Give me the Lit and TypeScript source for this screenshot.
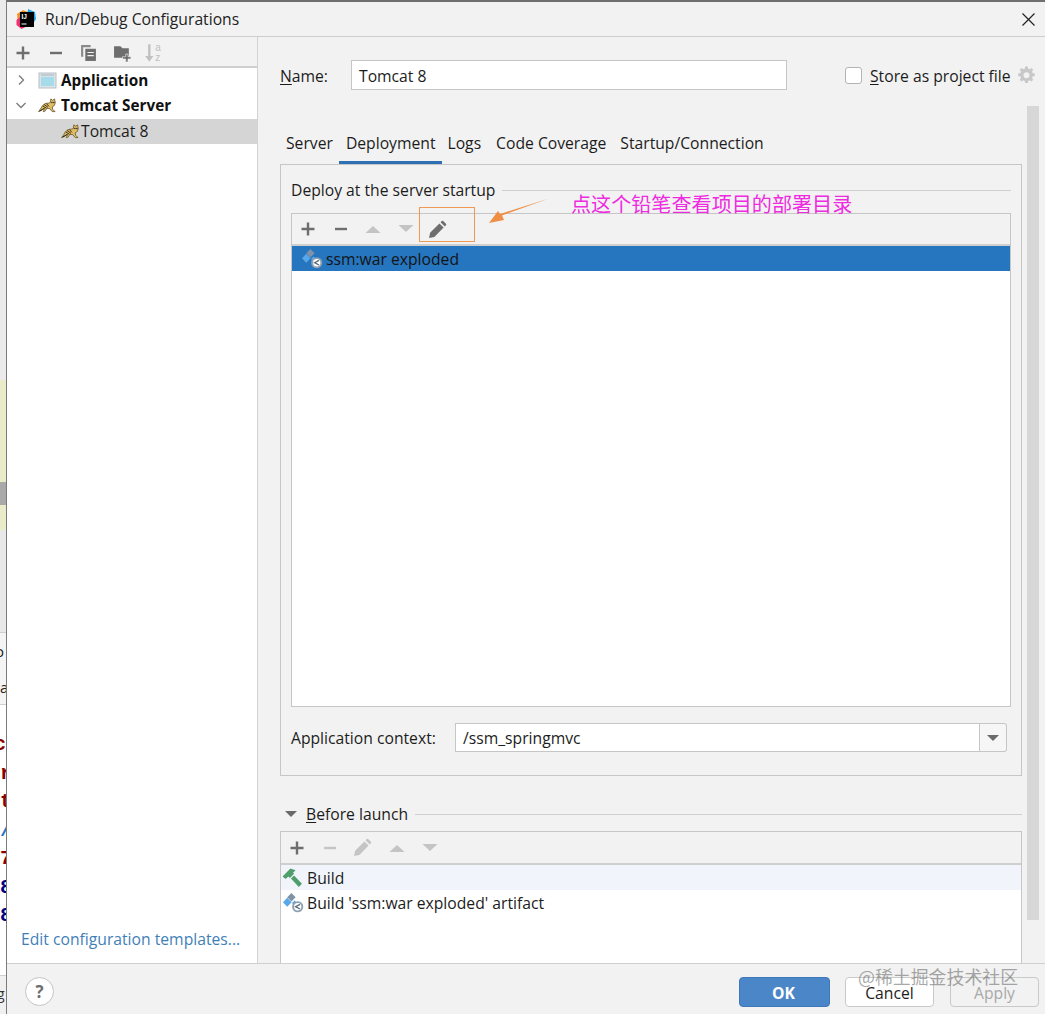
import { LitElement, html, css } from "lit";
import { customElement } from "lit/decorators.js";

const plus = (c = "#6e6e6e") => html`<svg width="16" height="16" viewBox="0 0 16 16"><path d="M1.500 6.800h5.300V1.500h2.400v5.300h5.300v2.400H9.200v5.300H6.800V9.200H1.500z" fill=${c}/></svg>`;
const minus = (c = "#6e6e6e") => html`<svg width="16" height="16" viewBox="0 0 16 16"><path d="M2 6.800h12v2.400H2z" fill=${c}/></svg>`;
const up = (c = "#c4c4c4") => html`<svg width="16" height="16" viewBox="0 0 16 16"><path d="M0.500 12L8 5l7.500 7z" fill=${c}/></svg>`;
const down = (c = "#c4c4c4") => html`<svg width="16" height="16" viewBox="0 0 16 16"><path d="M0.500 4L8 11l7.500-7z" fill=${c}/></svg>`;
const pencil = (c = "#6e6e6e") => html`<svg width="19" height="19" viewBox="0 0 18 18"><path d="M1 17l1-5L10.800 3.200l4 4L6 16zM11.900 2.100l1.100-1.100a1 1 0 0 1 1.400 0l2.600 2.600a1 1 0 0 1 0 1.400l-1.100 1.100z" fill=${c}/></svg>`;
const tomcat = html`<svg width="19" height="16" viewBox="0 0 20 17"><path d="M0.500 15.500C2 14 3 12 4.500 9.500 6 7.500 8 6.500 11 6.500l2-.500.500-4 2 1.500 2-1.500.800 4-1 3-2.300 1.500.500 2.500 2.500 2.500h-3l-2.500-3-3-.500-2.500 3.500H5.500l1.500-3.500-2.500 1.500-1.500 1z" fill="#e3bd62" stroke="#5d4e26" stroke-width=".8"/><path d="M5 9.500l4 2.500M6.500 8l4 3M9 7l2.500 3M1.500 15l5-3" stroke="#2e2a1c" stroke-width="1" fill="none"/><circle cx="14.700" cy="5.800" r=".8" fill="#222"/><circle cx="16.800" cy="5.800" r=".8" fill="#222"/></svg>`;
const artifact = html`<svg width="21" height="21" viewBox="0 0 20 20"><path d="M8 1l4 4-4 4-4-4z" fill="#7f93a8"/><path d="M4 5.500l4.200 4.200L4 14 0 9.700z" fill="#58a7e8"/><path d="M8.500 10.500l2.500-2.500 2 2-2.500 2.500z" fill="#58a7e8"/><circle cx="14" cy="14" r="5.300" fill="#8fa0b0"/><circle cx="14" cy="14" r="3.500" fill="#fff"/><path d="M16.200 11.800l-4.200 2.200 4.200 2.200" fill="none" stroke="#5a6e80" stroke-width="1.300"/></svg>`;

@customElement("app-root")
export class AppRoot extends LitElement {
  static styles = css`
    :host { display: block; width: 1045px; height: 1014px; overflow: hidden; position: relative; background: #f2f2f2;
      font: 15.700px "Open Sans", "Noto Sans", sans-serif; color: #1c1c1c; }
    * { box-sizing: border-box; }
    u { text-underline-offset: 2px; }
    .screen { display: flex; height: 1014px; }
    .strip { width: 7px; flex: none; display: flex; flex-direction: column; overflow: hidden; border-right: 1px solid #7b7b7b; font: 700 20px "Liberation Mono", monospace; }
    .seg { flex: none; white-space: nowrap; overflow: hidden; text-indent: -6px; }
    .s-light { background: #ebebeb; height: 380px; }
    .s-yel { background: #eaecc9; height: 102px; }
    .s-gray { background: #a9a9a9; height: 23px; }
    .s-yel2 { background: #eaecc9; height: 25px; }
    .s-light2 { background: #e8e8e8; height: 102px; }
    .s-words { height: 73px; background: #f4f4f4; border-top: 1px solid #cfcfcf; border-bottom: 1px solid #cfcfcf; color: #222; font: 400 15px/36px "Open Sans", sans-serif; text-indent: -5px; }
    .s-code { height: 270px; background: #fff; padding-top: 26px; line-height: 28.500px; }
    .s-end { flex: 1; background: #f0f0f0; border-top: 1px solid #cfcfcf; font: 400 14px/36px "Open Sans", sans-serif; color: #333; text-indent: -3px; }
    .red { color: #8a0000; } .blue { color: #2675bf; } .navy { color: #000080; }
    .dialog { flex: 1; min-width: 0; display: flex; flex-direction: column; border-top: 2px solid #6f6f6f; background: #f2f2f2; }
    .title { height: 35px; flex: none; border-bottom: 1px solid #cdcdcd; display: flex; align-items: center; padding: 0 9px 0 8px; gap: 8px; }
    .title .t { flex: 1; color: #222; }
    .body { flex: 1; min-height: 0; display: flex; }
    .side { width: 251px; flex: none; border-right: 1px solid #d2d2d2; display: flex; flex-direction: column; }
    .side-bar { height: 31px; flex: none; border-bottom: 2px solid #d0d0d0; display: flex; align-items: center; padding: 2px 0 0 8px; gap: 17px; }
    .side-bar .copy { margin-left: -1px; }
    .side-bar .folder { margin-left: -1px; }
    .side-bar .sort { margin-left: -5px; }
    .tree { flex: 1; background: #fff; display: flex; flex-direction: column; padding-bottom: 13px; }
    .row { height: 25px; display: flex; align-items: center; flex: none; line-height: 23px; padding-bottom: 1px; }
    .tw { width: 31px; padding-left: 8px; flex: none; display: flex; }
    .ico { width: 22px; flex: none; display: flex; margin-right: 1px; }
    .b { font-weight: 700; font-size: 15.300px; color: #111; }
    .sel { background: #d5d5d5; padding-left: 54px; margin-top: 1px; }
    .sel .cat { display: flex; width: 20px; flex: none; }
    .link { margin-top: auto; padding-left: 14px; color: #3f7fb8; }
    .main { flex: 1; min-width: 0; display: flex; padding: 23px 6px 0 22px; }
    .col { flex: 1; min-width: 0; display: flex; flex-direction: column; }
    .top { display: flex; align-items: center; height: 30px; flex: none; margin-right: -18px; }
    .top label { width: 71px; padding-top: 1px; }
    .top .store { padding-top: 2px; margin-right: 1px; }
    .input { background: #fff; border: 1px solid #c6c6c6; height: 30px; display: flex; align-items: center; padding-left: 7px; }
    .name { width: 436px; padding-top: 1px; }
    .check { width: 17px; height: 17px; background: #fff; border: 1px solid #b4b4b4; border-radius: 3px; margin: 0 8px 0 58px; flex: none; }
    .gear { margin-left: 6px; display: flex; }
    .tabs { display: flex; height: 43px; margin-top: 31px; flex: none; }
    .tab { padding: 11px 6px 0; white-space: nowrap; }
    .tab.active { box-shadow: inset 0 -3px #2f6fb4; padding: 11px 7px 0; }
    .tab.logs { margin-left: -1px; }
    .tab.cov { margin-left: 3px; }
    .tab.con { margin-left: 2px; }
    .panel { height: 612px; flex: none; width: 742px; border: 1px solid #c6c6c6; padding: 13px 10px 0 10px; display: flex; flex-direction: column; }
    .legend { display: flex; align-items: center; height: 24px; flex: none; gap: 7px; }
    .legend i { flex: 1; height: 1px; background: #cfcfcf; }
    .box { margin-top: 11px; border: 1px solid #c6c6c6; height: 494px; flex: none; display: flex; flex-direction: column; background: #fff; width: 720px; }
    .bar { height: 32px; flex: none; background: #f2f2f2; border-bottom: 2px solid #cfcfcf; display: flex; align-items: center; padding-left: 8px; gap: 17px; }
    .bar .shift { display: flex; margin-left: -1px; }
    .item { height: 25px; display: flex; align-items: center; flex: none; padding-left: 10px; gap: 3px; }
    .item.on { background: #2675bf; color: #141414; }
    .ctx { display: flex; align-items: center; margin-top: 16px; height: 29px; flex: none; }
    .ctx label { width: 164px; }
    .ctx .input { width: 525px; height: 29px; }
    .drop { width: 27px; height: 29px; border: 1px solid #c6c6c6; border-left: none; background: #f6f6f6; border-radius: 0 3px 3px 0; display: flex; align-items: center; justify-content: center; }
    .before { display: flex; align-items: center; height: 24px; margin-top: 26px; flex: none; width: 742px; }
    .before .tri { width: 26px; padding-left: 5px; display: flex; }
    .before i { flex: 1; height: 1px; background: #cfcfcf; margin-left: 7px; }
    .box2 { margin-top: 5px; border: 1px solid #c6c6c6; border-bottom: none; flex: 1; background: #fff; width: 742px; display: flex; flex-direction: column; }
    .box2 .bar { height: 33px; }
    .box2 .item { padding-left: 2px; gap: 3px; }
    .box2 .item.hi { background: #f1f5fb; gap: 4px; padding-left: 1px; }
    .sb { width: 12px; flex: none; margin-top: 46px; height: 814px; background: #d7d7d7; }
    .foot { height: 51px; flex: none; border-top: 1px solid #cfcfcf; display: flex; align-items: center; padding: 5px 6px 0 18px; }
    .help { width: 29px; height: 29px; border: 1px solid #c4c4c4; border-radius: 50%; background: #fff; display: flex; align-items: center; justify-content: center; font-weight: 700; font-size: 17px; color: #6e6e6e; margin-right: auto; }
    .btn { height: 30px; width: 89px; border: 1px solid #c9c9c9; border-radius: 4px; display: flex; align-items: center; justify-content: center; background: #fff; margin-left: 16px; padding-top: 3px; }
    .btn.ok { background: #4a86c8; border-color: #3f78b8; color: #fff; font-weight: 700; width: 91px; margin-right: -1px; padding: 2px 2px 0 0; }
    .btn.dis { background: #f2f2f2; color: #a8a8a8; }
    .rect { position: absolute; left: 419px; top: 207px; width: 56px; height: 35px; border: 1px solid #ee9a55; }
    .arrow { position: absolute; left: 485px; top: 195px; }
    .note { position: absolute; left: 571px; top: 191px; font: 20.100px/26px "Noto Sans CJK SC", sans-serif; color: #ee2be0; white-space: nowrap; }
    .mark { position: absolute; left: 858px; top: 964px; font: 17.900px/24px "Noto Sans CJK SC", sans-serif; color: rgba(110,110,110,.6); white-space: nowrap; }
    .pen { margin-left: -3px; display: flex; }
  `;

  render() {
    return html`
      <div class="screen">
        <div class="strip">
          <div class="seg s-light"></div>
          <div class="seg s-yel"></div>
          <div class="seg s-gray"></div>
          <div class="seg s-yel2"></div>
          <div class="seg s-light2"></div>
          <div class="seg s-words">o<br />a</div>
          <div class="seg s-code"><span class="red">c<br />r<br />t</span><br /><span class="blue">/</span><br /><span class="red">7</span><br /><span class="navy">8<br />8</span></div>
          <div class="seg s-end">g</div>
        </div>
        <div class="dialog">
          <div class="title">
            <svg width="22" height="22" viewBox="0 0 22 22">
              <path d="M2 6l6-4 5 2-5 10-5 1z" fill="#f79028"/><path d="M1.500 12l5-4 6 10-6 3-5-4z" fill="#ef2f6e"/><path d="M13 1l7 3 1 7-5 8-4-8z" fill="#2aa3e6"/>
              <rect x="5" y="4" width="14" height="15" fill="#000"/>
              <text x="6.500" y="11" font-size="6.500" font-weight="700" fill="#fff" font-family="Liberation Sans">IJ</text><rect x="6.500" y="15.500" width="5" height="1" fill="#fff"/>
            </svg>
            <span class="t">Run/Debug Configurations</span>
            <svg width="15" height="15" viewBox="0 0 15 15"><path d="M1.500 1.500l12 12M13.500 1.500l-12 12" stroke="#222" stroke-width="1.200" fill="none"/></svg>
          </div>
          <div class="body">
            <div class="side">
              <div class="side-bar">
                ${plus()}${minus()}
                <svg class="copy" width="17" height="18" viewBox="0 0 16 17"><path d="M1 1h9v2H3v9H1z" fill="#8a8a8a"/><path d="M5 4.500h10V16H5z" fill="#6e6e6e"/><path d="M7 7.500h6v1H7zM7 10.500h6v1H7z" fill="#f2f2f2"/></svg>
                <svg class="folder" width="19" height="18" viewBox="0 0 18 17"><path d="M1 2h6l2 2h6v9H1z" fill="#6e6e6e"/><path d="M12 9.500h2.200V12H17v2.200h-2.800V17H12v-2.800H9V12h3z" fill="#6e6e6e" stroke="#f2f2f2" stroke-width=".6"/></svg>
                <svg class="sort" width="20" height="20" viewBox="0 0 17 17"><path d="M3.500 1h2v10h2.500l-3.500 5-3.500-5h2.500z" fill="#c0c0c0"/><text x="9.500" y="7" font-size="8.500" fill="#c0c0c0" font-family="Liberation Sans">a</text><text x="9.500" y="15.500" font-size="8.500" fill="#c0c0c0" font-family="Liberation Sans">z</text></svg>
              </div>
              <div class="tree">
                <div class="row"><span class="tw"><svg width="12" height="12" viewBox="0 0 12 12"><path d="M4 1.500L8.500 6 4 10.500" fill="none" stroke="#7a7a7a" stroke-width="1.300"/></svg></span>
                  <span class="ico"><svg width="19" height="17" viewBox="0 0 19 17"><rect x="1" y="1" width="17" height="15" fill="#dbe3e8" stroke="#b7c0c6"/><rect x="3" y="5" width="13" height="9" fill="#a6dbe9"/><rect x="3" y="2.500" width="13" height="1" fill="#a9b3ba"/></svg></span>
                  <span class="b">Application</span></div>
                <div class="row"><span class="tw"><svg width="12" height="12" viewBox="0 0 12 12"><path d="M1.500 4L6 8.500 10.500 4" fill="none" stroke="#7a7a7a" stroke-width="1.300"/></svg></span>
                  <span class="ico">${tomcat}</span><span class="b">Tomcat Server</span></div>
                <div class="row sel"><span class="cat">${tomcat}</span><span>Tomcat 8</span></div>
                <div class="link">Edit configuration templates...</div>
              </div>
            </div>
            <div class="main">
              <div class="col">
                <div class="top">
                  <label><u>N</u>ame:</label>
                  <div class="input name">Tomcat 8</div>
                  <div class="check"></div>
                  <span class="store"><u>S</u>tore as project file</span>
                  <span class="gear"><svg width="18" height="18" viewBox="0 0 18 18"><path fill-rule="evenodd" d="M7.200 0.500h2.600l.4 2.200 1.500.600 1.800-1.300 1.800 1.800-1.300 1.800.600 1.500 2.200.4v2.600l-2.200.4-.600 1.500 1.300 1.800-1.800 1.800-1.800-1.300-1.500.600-.4 2.200H7.200l-.4-2.200-1.500-.600-1.800 1.300-1.800-1.800 1.300-1.800-.600-1.500-2.200-.4V7.500l2.200-.4.600-1.500L1.700 3.800l1.800-1.800 1.800 1.300 1.500-.600zM8.500 6.300a3 3 0 1 0 0 6 3 3 0 0 0 0-6z" fill="#c8c8c8"/></svg></span>
                </div>
                <div class="tabs">
                  <div class="tab">Server</div>
                  <div class="tab active">Deployment</div>
                  <div class="tab logs">Logs</div>
                  <div class="tab cov">Code Coverage</div>
                  <div class="tab con">Startup/Connection</div>
                </div>
                <div class="panel">
                  <div class="legend"><span>Deploy at the server startup</span><i></i></div>
                  <div class="box">
                    <div class="bar">${plus()}${minus()}<span class="shift">${up()}</span>${down()}<span class="pen">${pencil()}</span></div>
                    <div class="item on">${artifact}<span>ssm:war exploded</span></div>
                  </div>
                  <div class="ctx">
                    <label>Application context:</label>
                    <div class="input">/ssm_springmvc</div>
                    <div class="drop"><svg width="12" height="8" viewBox="0 0 12 8"><path d="M0 1h12L6 7z" fill="#6a6a6a"/></svg></div>
                  </div>
                </div>
                <div class="before">
                  <span class="tri"><svg width="12" height="8" viewBox="0 0 12 8"><path d="M0 1h12L6 7z" fill="#6a6a6a"/></svg></span>
                  <span><u>B</u>efore launch</span><i></i>
                </div>
                <div class="box2">
                  <div class="bar">${plus()}${minus("#c4c4c4")}<span class="pen" style="margin-left:-2px">${pencil("#c4c4c4")}</span>${up()}${down()}</div>
                  <div class="item hi"><svg width="21" height="21" viewBox="0 0 20 20"><path d="M0.500 9L8 1.500 13 3 10.500 5.500 11.500 6.500 7.500 10.500 6 9 3.500 11.500z" fill="#4f9e6c"/><path d="M8.500 11l3-3 7.500 8-3 3z" fill="#4f9e6c"/></svg><span>Build</span></div>
                  <div class="item">${artifact}<span>Build 'ssm:war exploded' artifact</span></div>
                </div>
              </div>
              <div class="sb"></div>
            </div>
          </div>
          <div class="foot">
            <div class="help">?</div>
            <div class="btn ok">OK</div>
            <div class="btn">Cancel</div>
            <div class="btn dis">Apply</div>
          </div>
        </div>
      </div>
      <div class="rect"></div>
      <svg class="arrow" width="66" height="32" viewBox="0 0 66 32"><path d="M64 3.500L17 20.500l2 4.500L4 28l9-12 2 3z" fill="#ef8e45"/></svg>
      <div class="note">点这个铅笔查看项目的部署目录</div>
      <div class="mark">@稀土掘金技术社区</div>
    `;
  }
}
